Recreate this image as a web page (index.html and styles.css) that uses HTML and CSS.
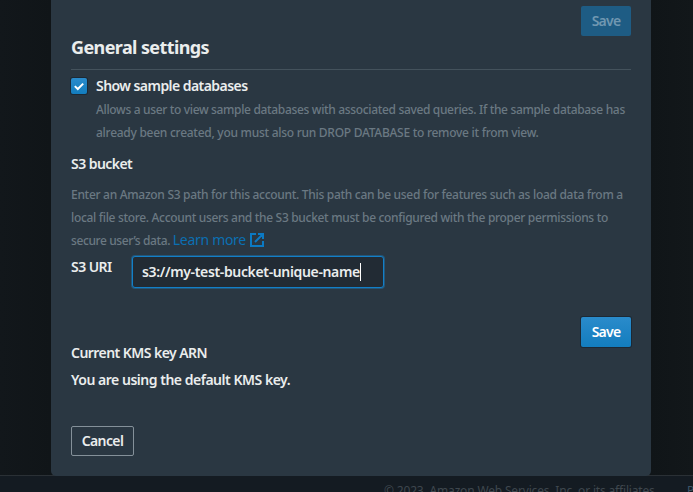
FILE: index.html
```html
<!DOCTYPE html>
<html lang="en">
<head>
<meta charset="utf-8">
<title>General settings</title>
<link rel="stylesheet" href="styles.css">
</head>
<body>
<main class="modal">
  <div class="actions"><button class="btn disabled">Save</button></div>
  <h2>General settings</h2>
  <section class="sample">
    <span class="check"><svg viewBox="0 0 16 16" width="16" height="16"><path d="M3.8 8.1 6.8 11 12.2 5.6" fill="none" stroke="#fff" stroke-width="2"/></svg></span>
    <div>
      <div class="label show">Show sample databases</div>
      <p class="hint"><span class="line-1">Allows a user to view sample databases with associated saved queries. If the sample database has</span><br><span class="line-2">already been created, you must also run DROP DATABASE to remove it from view.</span></p>
    </div>
  </section>
  <div class="label bucket">S3 bucket</div>
  <p class="hint about"><span class="line-3">Enter an Amazon S3 path for this account. This path can be used for features such as load data from a</span><br><span class="line-4">local file store. Account users and the S3 bucket must be configured with the proper permissions to</span><br><span class="line-5">secure user’s data. </span><a class="link">Learn more<svg viewBox="0 0 14 14" width="14" height="14"><path d="M6 1H1v12h12V8M8 1h5v5M13 1 5 9" fill="none" stroke="#0b7ac4" stroke-width="2"/></svg></a></p>
  <div class="field">
    <div class="label">S3 URI</div>
    <div class="input"><span>s3://my-test-bucket-unique-name</span><i class="caret"></i></div>
  </div>
  <div class="actions second"><button class="btn">Save</button></div>
  <div class="label current">Current KMS key ARN</div>
  <div class="label using">You are using the default KMS key.</div>
  <button class="btn cancel">Cancel</button>
</main>
<footer><span>© 2023, Amazon Web Services, Inc. or its affiliates.</span><a>P</a></footer>
</body>
</html>
```
FILE: styles.css
```css
* { box-sizing: border-box; }
body {
  margin: 0;
  height: 492px;
  overflow: hidden;
  background: linear-gradient(90deg, #12171b 0, #101518 51px, #101518 651px, #12171a 693px);
  font-family: "Noto Sans", "Open Sans", sans-serif;
  color: #eaeded;
  white-space: nowrap;
}
.modal {
  position: relative;
  z-index: 1;
  width: 600px;
  height: 476px;
  margin-left: 51px;
  padding: 6px 20px 0;
  background: #2a3742;
  border-radius: 0 0 5px 5px;
}
.actions { display: flex; justify-content: flex-end; height: 30px; }
.btn {
  width: 50px;
  height: 30px;
  padding: 0;
  border: 0;
  border-radius: 2px;
  background: linear-gradient(#2a8bcb, #137dbe);
  box-shadow: 0 0 0 1px #1c2935;
  color: #fff;
  font: 600 14px/28px "Noto Sans", sans-serif;
  letter-spacing: -0.75px;
}
.btn.disabled { background: #1e5c84; color: #7097b1; box-shadow: none; line-height: 30px; }
h2 {
  height: 34px;
  margin: 0;
  border-bottom: 1px solid #44525c;
  font-size: 18px;
  line-height: 22px;
  font-weight: 700;
  letter-spacing: -0.6px;
}
.sample { display: flex; gap: 9px; padding-top: 8px; }
.check {
  width: 16px;
  height: 16px;
  border-radius: 2px;
  background: linear-gradient(#2a8bcb, #137dbe);
  box-shadow: 0 0 0 1px #1c2935;
}
.check svg { display: block; }
.label { height: 20px; font-size: 14px; line-height: 16px; font-weight: 600; letter-spacing: -0.55px; }
.hint { margin: 0; height: 46px; font-size: 12px; line-height: 23px; font-weight: 500; color: #6b7983; }
.line-1 { letter-spacing: -0.34px; }
.line-2 { letter-spacing: -0.27px; }
.line-3 { letter-spacing: -0.3px; }
.line-4 { letter-spacing: -0.32px; }
.line-5 { letter-spacing: -0.4px; }
.bucket { margin-top: 11px; line-height: 18px; }
.hint.about { margin-top: 8px; height: 69px; }
.link { color: #0b70b3; font-size: 14px; line-height: 16px; font-weight: 400; letter-spacing: -0.3px; }
.link svg { margin-left: 4px; vertical-align: -2px; }
.field { display: flex; height: 36px; margin-top: 3px; }
.field .label { width: 61px; line-height: 24px; }
.input {
  display: flex;
  align-items: center;
  width: 252px;
  height: 32px;
  padding-left: 9px;
  margin-top: 1px;
  border: 1px solid #127fc8;
  border-radius: 3px;
  background: #222b34;
  box-shadow: 0 0 0 1px #245678;
  font-size: 14px;
  font-weight: 600;
  letter-spacing: -0.35px;
  line-height: 18px;
}
.caret { width: 1px; height: 18px; background: #fff; }
.second { margin-top: 26px; }
.current { margin-top: -3px; line-height: 18px; }
.using { margin-top: 7px; line-height: 18px; letter-spacing: -0.48px; }
.cancel {
  display: block;
  width: 63px;
  margin-top: 35px;
  border: 1px solid #849099;
  background: none;
  box-shadow: none;
  letter-spacing: -0.6px;
  color: #eaeded;
}
footer {
  height: 17px;
  display: flex;
  justify-content: space-between;
  margin-top: -1px;
  padding: 7px 0 0 384px;
  border-top: 1px solid #2a3035;
  background: #141b22;
  color: #3f474e;
  font-size: 12px;
  line-height: 16px;
  letter-spacing: -0.17px;
}
footer a { width: 6px; color: #3b5568; }
```
